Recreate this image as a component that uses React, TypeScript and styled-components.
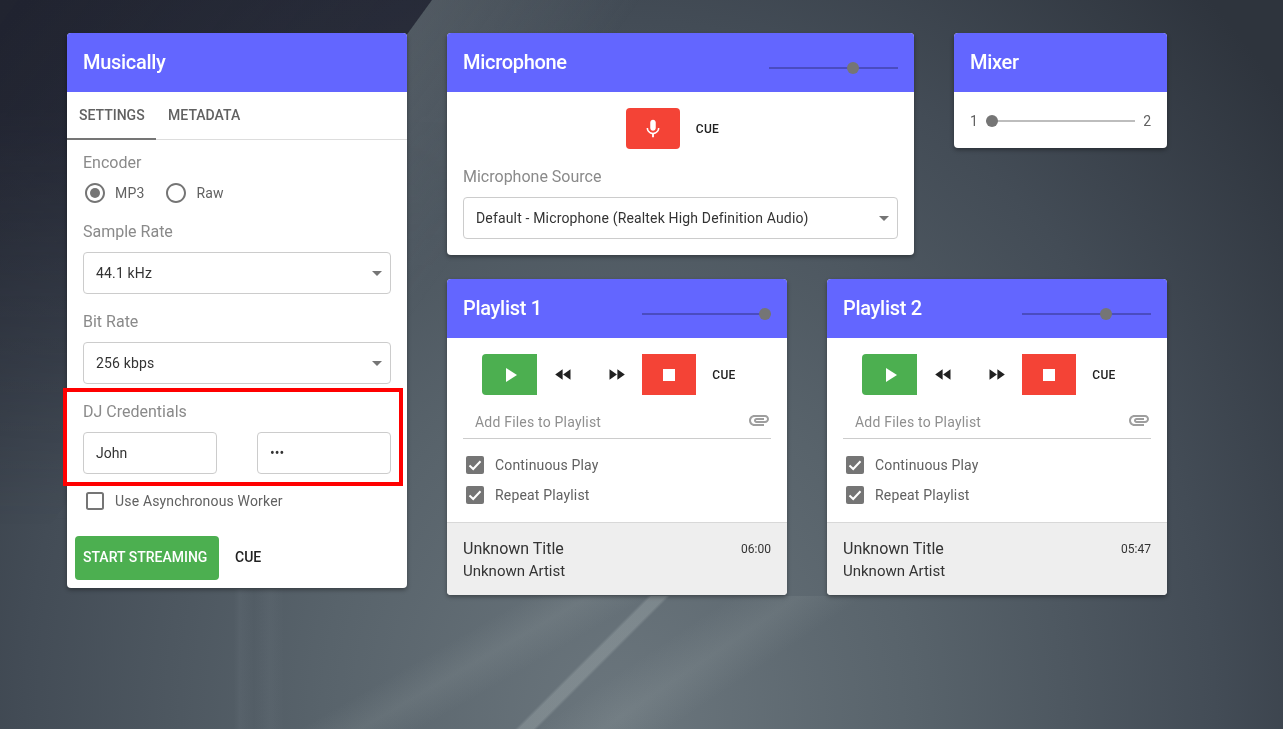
import React from "react";
import styled, { createGlobalStyle } from "styled-components";

const GlobalStyle = createGlobalStyle`
  html, body {
    margin: 0;
    height: 100%;
    overflow: hidden;
  }

  body {
    position: relative;
    font-family: Roboto, "Liberation Sans", sans-serif;
    background-color: #3a424b;
    background-image:
      linear-gradient(135deg, transparent 458px, rgba(190, 200, 200, 0.27) 461px, rgba(190, 200, 200, 0.27) 471px, transparent 474px),
      linear-gradient(150deg, transparent 35%, rgba(170, 180, 180, 0.13) 39%, transparent 43%),
      linear-gradient(146deg, transparent 49.5%, rgba(170, 180, 180, 0.13) 54%, transparent 58.5%),
      linear-gradient(90deg, transparent 234px, rgba(170, 180, 190, 0.06) 240px, transparent 254px, rgba(170, 180, 190, 0.05) 270px, transparent 284px),
      radial-gradient(850px 1000px at 620px 720px, #6b767d 0, #58636b 35%, #434c56 70%, #2e343d 100%);
    background-size: 100% 133px, 100% 133px, 100% 133px, 100% 140px, 100% 100%;
    background-position: 0 596px, 0 596px, 0 596px, 0 589px, 0 0;
    background-repeat: no-repeat;
  }

  /* dark wedge at the top left of the wallpaper, with the pale edge beside it */
  body::before {
    content: "";
    position: fixed;
    inset: 0;
    background: linear-gradient(126deg, rgba(20, 20, 36, 0.5) 0, rgba(20, 20, 36, 0.55) 349px, rgba(170, 180, 180, 0.16) 350px, transparent 520px);
    mask-image: linear-gradient(to bottom, #000 15%, transparent 72%);
  }

  #root {
    position: relative;
  }
`;

const Page = styled.div`
  display: flex;
  align-items: flex-start;
  gap: 40px;
  padding: 33px 0 0 67px;
`;

const Column = styled.div`
  display: flex;
  flex-direction: column;
  gap: 24px;
`;

const Row = styled.div`
  display: flex;
  align-items: flex-start;
  gap: 40px;
`;

const Card = styled.section<{ $width: number }>`
  width: ${(p) => p.$width}px;
  background: #fff;
  border-radius: 4px;
  box-shadow: 0 2px 4px rgba(0, 0, 0, 0.35);
`;

const CardHeader = styled.header`
  display: flex;
  align-items: center;
  justify-content: space-between;
  height: 59px;
  padding: 0 16px;
  border-radius: 4px 4px 0 0;
  background: #6366ff;
`;

const CardTitle = styled.h2`
  margin: 0 0 1px;
  color: #fff;
  font-size: 20px;
  font-weight: 500;
  letter-spacing: -0.3px;
`;

const SliderTrack = styled.div<{ $width?: number; $light?: boolean }>`
  position: relative;
  flex: ${(p) => (p.$width ? "none" : "1")};
  width: ${(p) => (p.$width ? `${p.$width}px` : "auto")};
  height: 2px;
  background: ${(p) => (p.$light ? "#bdbdbd" : "#4a4cc0")};
`;

const HeaderSlider = styled(SliderTrack)`
  margin-top: 11px;
`;

const SliderThumb = styled.span<{ $at: number }>`
  position: absolute;
  top: -5px;
  left: ${(p) => p.$at - 6}px;
  width: 12px;
  height: 12px;
  border-radius: 50%;
  background: #757575;
`;

const TabBar = styled.div`
  display: flex;
  height: 48px;
  border-bottom: 1px solid #ddd;
  box-sizing: border-box;
`;

const Tab = styled.div<{ $active?: boolean }>`
  display: flex;
  align-items: center;
  height: 48px;
  box-sizing: border-box;
  padding: 0 11.5px 0 12px;
  color: #616161;
  font-size: 14px;
  font-weight: 500;
  border-bottom: 2px solid ${(p) => (p.$active ? "#757575" : "transparent")};
`;

const SettingsBody = styled.div`
  padding: 10px 16px 0;
`;

const FieldLabel = styled.div`
  height: 24px;
  line-height: 26px;
  color: #8a8a8a;
  font-size: 16px;
`;

const RadioRow = styled.div`
  display: flex;
  gap: 20px;
  margin-top: 7px;
  margin-bottom: 14px;
`;

const OptionLabel = styled.label`
  display: flex;
  align-items: center;
  gap: 8px;
  height: 24px;
  color: #616161;
  font-size: 14px;
  letter-spacing: 0.17px;
`;

const SelectBox = styled.div<{ $gap?: number }>`
  display: flex;
  align-items: center;
  justify-content: space-between;
  height: 42px;
  box-sizing: border-box;
  margin-top: 9px;
  margin-bottom: ${(p) => p.$gap ?? 15}px;
  padding: 0 8px 0 12px;
  border: 1px solid #ccc;
  border-radius: 4px;
  color: #333;
  font-size: 14px;
  letter-spacing: 0.16px;
`;

const Caret = styled.span`
  width: 0;
  height: 0;
  border-left: 5px solid transparent;
  border-right: 5px solid transparent;
  border-top: 5px solid #757575;
`;

const CredentialSection = styled.div`
  position: relative;
  margin-bottom: 15px;
`;

const Highlight = styled.div`
  position: absolute;
  top: -11px;
  bottom: -12px;
  left: -20px;
  right: -12px;
  border: 4px solid #f00;
  pointer-events: none;
`;

const CredentialRow = styled.div`
  display: flex;
  justify-content: space-between;
  margin-top: 9px;
`;

const TextInput = styled.input`
  width: 134px;
  height: 42px;
  box-sizing: border-box;
  padding: 0 12px;
  border: 1px solid #ccc;
  border-radius: 4px;
  outline: none;
  color: #333;
  font-family: inherit;
  font-size: 14px;
`;

const StreamActions = styled.div`
  display: flex;
  align-items: center;
  margin-top: 23px;
  padding: 0 8px 8px;
`;

const StartButton = styled.button`
  height: 44px;
  width: 144px;
  padding: 0 8px 2px;
  border: none;
  border-radius: 4px;
  background: #4caf50;
  color: #fff;
  font-family: inherit;
  font-size: 14px;
  font-weight: 500;
  text-align: left;
  white-space: nowrap;
`;

const CueButton = styled.button`
  padding: 0 16px;
  border: none;
  background: none;
  color: #212121;
  font-family: inherit;
  font-weight: 500;
`;

const LargeCue = styled(CueButton)`
  padding-bottom: 2px;
  font-size: 14px;
`;

const SmallCue = styled(CueButton)`
  font-size: 12px;
  letter-spacing: 0.3px;
`;

const ButtonRow = styled.div`
  display: flex;
  justify-content: center;
  align-items: stretch;
  height: 41px;
`;

const IconButton = styled.button<{ $bg?: string; $width: number; $radius?: string }>`
  display: flex;
  align-items: center;
  justify-content: center;
  width: ${(p) => p.$width}px;
  padding: 0;
  border: none;
  border-radius: ${(p) => p.$radius ?? "0"};
  background: ${(p) => p.$bg ?? "none"};
  color: ${(p) => (p.$bg ? "#fff" : "#212121")};
`;

const CardBody = styled.div`
  padding: 16px;
`;

const SourceLabel = styled(FieldLabel)`
  margin-top: 15px;
`;

const FileRow = styled.div`
  display: flex;
  align-items: center;
  justify-content: space-between;
  height: 39px;
  box-sizing: border-box;
  margin-top: 5px;
  padding: 5px 0 0 12px;
  border-bottom: 1px solid #ccc;
  color: #8f8f8f;
  font-size: 14px;
  letter-spacing: 0.2px;
`;

const ClipIcon = styled.svg`
  display: block;
  margin-bottom: 3px;
  fill: #9e9e9e;
`;

const CheckList = styled.div`
  display: flex;
  flex-direction: column;
  gap: 6px;
  margin-top: 14px;
  margin-bottom: -1px;
`;

const TrackFooter = styled.footer`
  display: grid;
  grid-template-columns: 1fr auto;
  padding: 15px 16px 14px;
  border-top: 1px solid #d8d8d8;
  border-radius: 0 0 4px 4px;
  background: #eee;
  color: #333;
`;

const TrackTitle = styled.div`
  font-size: 16px;
  line-height: 22px;
`;

const TrackTime = styled.div`
  font-size: 12px;
  line-height: 22px;
`;

const TrackArtist = styled.div`
  grid-column: 1 / -1;
  font-size: 15px;
  line-height: 20px;
  margin-top: 1px;
`;

const MixerBody = styled.div`
  display: flex;
  align-items: center;
  gap: 8px;
  height: 56px;
  box-sizing: border-box;
  padding: 2px 16px 0;
  color: #616161;
  font-size: 14px;
`;

const Glyph = ({ d, size = 24 }: { d: string; size?: number }) => (
  <svg width={size} height={size} viewBox="0 0 24 24" fill="currentColor">
    <path d={d} />
  </svg>
);

const RadioIcon = ({ on }: { on?: boolean }) => (
  <svg width="24" height="24" viewBox="0 0 24 24" fill="#757575">
    <path d="M12 2C6.48 2 2 6.48 2 12s4.48 10 10 10 10-4.48 10-10S17.52 2 12 2zm0 18c-4.42 0-8-3.58-8-8s3.58-8 8-8 8 3.58 8 8-3.58 8-8 8z" />
    {on && <circle cx="12" cy="12" r="5" />}
  </svg>
);

const CheckIcon = ({ on }: { on?: boolean }) => (
  <svg width="24" height="24" viewBox="0 0 24 24">
    {on ? (
      <>
        <rect x="3" y="3" width="18" height="18" rx="2" fill="#757575" />
        <polyline points="6.5,12.5 10.2,16 17.5,8.2" fill="none" stroke="#fff" strokeWidth="2" />
      </>
    ) : (
      <rect x="4" y="4" width="16" height="16" rx="1.5" fill="none" stroke="#757575" strokeWidth="2" />
    )}
  </svg>
);

const icons = {
  mic: "M12 14c1.66 0 2.99-1.34 2.99-3L15 5c0-1.66-1.34-3-3-3S9 3.34 9 5v6c0 1.66 1.34 3 3 3zm5.3-3c0 3-2.54 5.1-5.3 5.1S6.7 14 6.7 11H5c0 3.41 2.72 6.23 6 6.72V21h2v-3.28c3.28-.48 6-3.3 6-6.72h-1.7z",
  play: "M8 5v14l11-7z",
  stop: "M6 6h12v12H6z",
  rewind: "M11 18V6l-8.5 6 8.5 6zm.5-6l8.5 6V6l-8.5 6z",
  forward: "M4 18l8.5-6L4 6v12zm9-12v12l8.5-6L13 6z",
  clip: "M2 12.5C2 9.46 4.46 7 7.5 7H18c2.21 0 4 1.79 4 4s-1.79 4-4 4H9.5C8.12 15 7 13.88 7 12.5S8.12 10 9.5 10H17v2H9.41c-.55 0-.55 1 0 1H18c1.1 0 2-.9 2-2s-.9-2-2-2H7.5C5.57 9 4 10.57 4 12.5S5.57 16 7.5 16H17v2H7.5C4.46 18 2 15.54 2 12.5z",
};

const Playlist = ({ title, volume, time }: { title: string; volume: number; time: string }) => (
  <Card $width={340}>
    <CardHeader>
      <CardTitle>{title}</CardTitle>
      <HeaderSlider $width={129}>
        <SliderThumb $at={volume} />
      </HeaderSlider>
    </CardHeader>
    <CardBody>
      <ButtonRow>
        <IconButton $bg="#4caf50" $width={55} $radius="4px 0 0 4px">
          <Glyph d={icons.play} />
        </IconButton>
        <IconButton $width={52.5}>
          <Glyph d={icons.rewind} size={21} />
        </IconButton>
        <IconButton $width={52.5}>
          <Glyph d={icons.forward} size={21} />
        </IconButton>
        <IconButton $bg="#f44336" $width={54}>
          <Glyph d={icons.stop} />
        </IconButton>
        <SmallCue>CUE</SmallCue>
      </ButtonRow>
      <FileRow>
        Add Files to Playlist
        <ClipIcon width="24" height="24" viewBox="0 0 24 24">
          <path d={icons.clip} />
        </ClipIcon>
      </FileRow>
      <CheckList>
        <OptionLabel>
          <CheckIcon on /> Continuous Play
        </OptionLabel>
        <OptionLabel>
          <CheckIcon on /> Repeat Playlist
        </OptionLabel>
      </CheckList>
    </CardBody>
    <TrackFooter>
      <TrackTitle>Unknown Title</TrackTitle>
      <TrackTime>{time}</TrackTime>
      <TrackArtist>Unknown Artist</TrackArtist>
    </TrackFooter>
  </Card>
);

const App = () => (
  <>
    <GlobalStyle />
    <Page>
      <Card $width={340}>
        <CardHeader>
          <CardTitle>Musically</CardTitle>
        </CardHeader>
        <TabBar>
          <Tab $active>SETTINGS</Tab>
          <Tab>METADATA</Tab>
        </TabBar>
        <SettingsBody>
          <FieldLabel>Encoder</FieldLabel>
          <RadioRow>
            <OptionLabel>
              <RadioIcon on /> MP3
            </OptionLabel>
            <OptionLabel>
              <RadioIcon /> Raw
            </OptionLabel>
          </RadioRow>
          <FieldLabel>Sample Rate</FieldLabel>
          <SelectBox>
            44.1 kHz
            <Caret />
          </SelectBox>
          <FieldLabel>Bit Rate</FieldLabel>
          <SelectBox>
            256 kbps
            <Caret />
          </SelectBox>
          <CredentialSection>
            <FieldLabel>DJ Credentials</FieldLabel>
            <CredentialRow>
              <TextInput readOnly value="John" />
              <TextInput readOnly type="password" value="abc" />
            </CredentialRow>
            <Highlight />
          </CredentialSection>
          <OptionLabel>
            <CheckIcon /> Use Asynchronous Worker
          </OptionLabel>
        </SettingsBody>
        <StreamActions>
          <StartButton>START STREAMING</StartButton>
          <LargeCue>CUE</LargeCue>
        </StreamActions>
      </Card>
      <Column>
        <Row>
          <Card $width={467}>
            <CardHeader>
              <CardTitle>Microphone</CardTitle>
              <HeaderSlider $width={129}>
                <SliderThumb $at={84} />
              </HeaderSlider>
            </CardHeader>
            <CardBody>
              <ButtonRow>
                <IconButton $bg="#f44336" $width={54} $radius="4px">
                  <Glyph d={icons.mic} size={22} />
                </IconButton>
                <SmallCue>CUE</SmallCue>
              </ButtonRow>
              <SourceLabel>Microphone Source</SourceLabel>
              <SelectBox $gap={0}>
                Default - Microphone (Realtek High Definition Audio)
                <Caret />
              </SelectBox>
            </CardBody>
          </Card>
          <Card $width={213}>
            <CardHeader>
              <CardTitle>Mixer</CardTitle>
            </CardHeader>
            <MixerBody>
              1
              <SliderTrack $light>
                <SliderThumb $at={6} />
              </SliderTrack>
              2
            </MixerBody>
          </Card>
        </Row>
        <Row>
          <Playlist title="Playlist 1" volume={123} time="06:00" />
          <Playlist title="Playlist 2" volume={84} time="05:47" />
        </Row>
      </Column>
    </Page>
  </>
);

export default App;
